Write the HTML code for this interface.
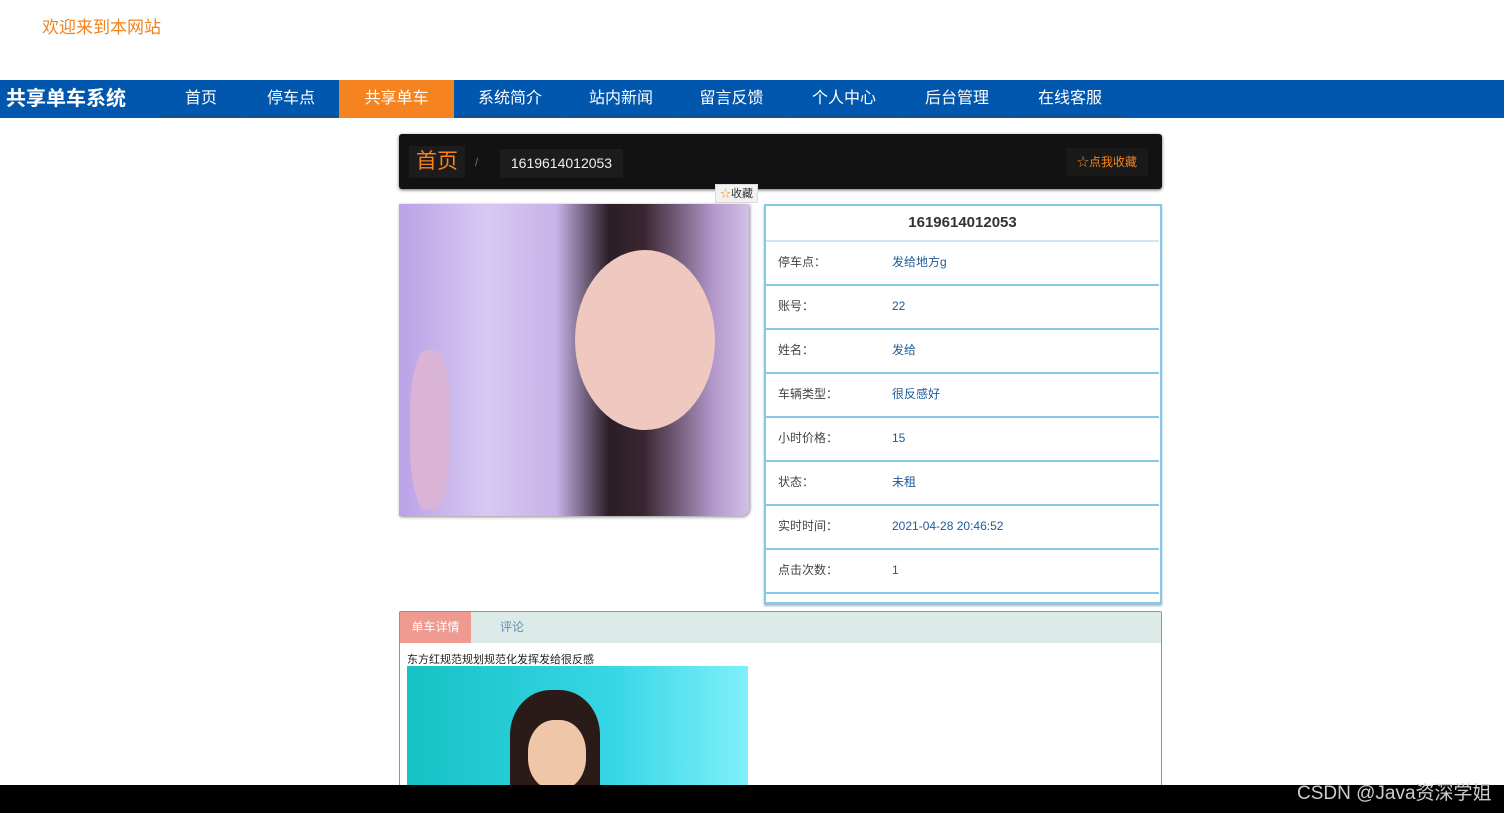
<!DOCTYPE html>
<html><head><meta charset="utf-8"><style>
*{margin:0;padding:0;box-sizing:border-box}
body{width:1504px;height:813px;overflow:hidden;background:#fff;font-family:"Liberation Sans","Noto Sans CJK SC",sans-serif;position:relative}
.a{position:absolute}
.nav{left:0;top:80px;width:1504px;height:38px;background:#0156ad}
.ni{top:80px;height:38px;line-height:38px;color:#fff;font-size:16px;text-align:center;border-bottom:2px solid #1c4e86}
.row{position:absolute;left:766px;width:393px;height:44px;border-bottom:2px solid #86c8e6;font-size:12px;line-height:40px}
.row .k{position:absolute;left:12px;color:#444}
.row .v{position:absolute;left:126px;color:#1d5b96}
</style></head><body>
<div class="a" style="left:42px;top:13px;color:#f0831e;font-size:17px">欢迎来到本网站</div>
<div class="a nav"></div>
<div class="a" style="left:6px;top:80px;line-height:38px;color:#fff;font-size:20px;font-weight:bold">共享单车系统</div>
<div class="a ni" style="left:162px;width:78px">首页</div>
<div class="a ni" style="left:244px;width:94px">停车点</div>
<div class="a ni" style="left:339px;width:115px;background:#f5831f;border-bottom-color:#f5831f">共享单车</div>
<div class="a ni" style="left:457px;width:106px">系统简介</div>
<div class="a ni" style="left:567px;width:108px">站内新闻</div>
<div class="a ni" style="left:678px;width:107px">留言反馈</div>
<div class="a ni" style="left:789px;width:110px">个人中心</div>
<div class="a ni" style="left:902px;width:110px">后台管理</div>
<div class="a ni" style="left:1015px;width:110px">在线客服</div>

<div class="a" style="left:399px;top:134px;width:763px;height:55px;background:#121212;border-radius:3px;box-shadow:0 1px 3px #666"></div>
<div class="a" style="left:409px;top:146px;width:56px;height:32px;background:#1c1c1c;color:#f5831f;font-size:21px;line-height:32px;text-align:center">首页</div>
<div class="a" style="left:475px;top:157px;color:#777;font-size:11px">/</div>
<div class="a" style="left:500px;top:149px;width:123px;height:29px;background:#1c1c1c;color:#eee;font-size:14px;line-height:29px;text-align:center">1619614012053</div>
<div class="a" style="left:1066px;top:148px;width:82px;height:28px;background:#191919;color:#f5831f;font-size:12px;line-height:28px;text-align:center">☆点我收藏</div>
<div class="a" style="left:715px;top:184px;width:43px;height:19px;background:#f2f2f2;color:#333;font-size:11px;line-height:19px;text-align:center;border:1px solid #ddd"><span style="color:#f5a623">☆</span>收藏</div>

<div class="a" style="left:399px;top:204px;width:350px;height:312px;border-radius:0 0 8px 0;box-shadow:1px 1px 3px #888;overflow:hidden;background:linear-gradient(90deg,#b9a2e6 0,#d8c9f2 25%,#c7b3e8 45%,#2a1d26 60%,#3a2630 70%,#b499cc 90%,#d2c0e6 100%)">
<div class="a" style="left:176px;top:46px;width:140px;height:180px;border-radius:50%;background:#efc8c0"></div>
<div class="a" style="left:11px;top:146px;width:40px;height:160px;border-radius:40%;background:#d9b4d6"></div>
</div>

<div class="a" style="left:764px;top:204px;width:398px;height:400px;border:2px solid #86c8e6;box-shadow:0 2px 2px #9bc"></div>
<div class="a" style="left:766px;top:206px;width:393px;height:36px;border-bottom:2px solid #cfe7f2;text-align:center;line-height:34px;font-weight:bold;font-size:15px;color:#333">1619614012053</div>
<div class="row" style="top:242px"><span class="k">停车点：</span><span class="v">发给地方g</span></div>
<div class="row" style="top:286px"><span class="k">账号：</span><span class="v">22</span></div>
<div class="row" style="top:330px"><span class="k">姓名：</span><span class="v">发给</span></div>
<div class="row" style="top:374px"><span class="k">车辆类型：</span><span class="v">很反感好</span></div>
<div class="row" style="top:418px"><span class="k">小时价格：</span><span class="v">15</span></div>
<div class="row" style="top:462px"><span class="k">状态：</span><span class="v">未租</span></div>
<div class="row" style="top:506px"><span class="k">实时时间：</span><span class="v">2021-04-28 20:46:52</span></div>
<div class="row" style="top:550px"><span class="k">点击次数：</span><span class="v">1</span></div>

<div class="a" style="left:399px;top:611px;width:763px;height:190px;border:1px solid #6b9cc4;border-radius:2px"></div>
<div class="a" style="left:400px;top:612px;width:761px;height:31px;background:#dcebe7"></div>
<div class="a" style="left:400px;top:612px;width:71px;height:31px;background:#ee9a90;color:#fff;font-size:12px;line-height:31px;text-align:center">单车详情</div>
<div class="a" style="left:500px;top:612px;color:#5f8fb8;font-size:12px;line-height:31px">评论</div>
<div class="a" style="left:407px;top:651px;color:#222;font-size:11px">东方红规范规划规范化发挥发给很反感</div>
<div class="a" style="left:407px;top:666px;width:341px;height:120px;background:linear-gradient(90deg,#15c2c4,#37d6e6 60%,#7ff0fa)"></div>
<div class="a" style="left:510px;top:690px;width:90px;height:100px;border-radius:45% 45% 0 0;background:#2a1b18"></div>
<div class="a" style="left:528px;top:720px;width:58px;height:70px;border-radius:45%;background:#f0c6a8"></div>

<div class="a" style="left:0;top:785px;width:1504px;height:28px;background:#000"></div>
<div class="a" style="left:1297px;top:782px;color:#ccc;font-size:19px;line-height:24px">CSDN @Java资深学姐</div>
</body></html>
